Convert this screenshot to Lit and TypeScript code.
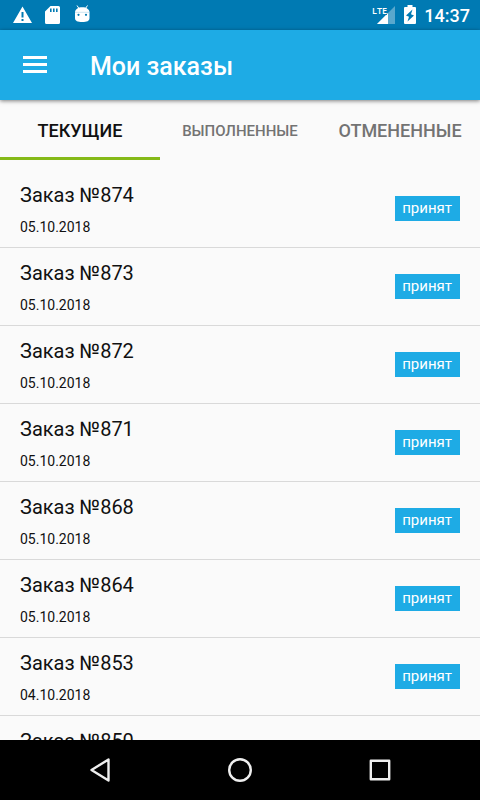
import { LitElement, html, css, svg } from "lit";
import { customElement, state } from "lit/decorators.js";
import { classMap } from "lit/directives/class-map.js";

interface Order {
  id: number;
  date: string;
  status: string;
}

const TABS = [
  { label: "ТЕКУЩИЕ", small: false },
  { label: "ВЫПОЛНЕННЫЕ", small: true },
  { label: "ОТМЕНЕННЫЕ", small: false },
];

const ORDERS: Order[] = [
  { id: 874, date: "05.10.2018", status: "принят" },
  { id: 873, date: "05.10.2018", status: "принят" },
  { id: 872, date: "05.10.2018", status: "принят" },
  { id: 871, date: "05.10.2018", status: "принят" },
  { id: 868, date: "05.10.2018", status: "принят" },
  { id: 864, date: "05.10.2018", status: "принят" },
  { id: 853, date: "04.10.2018", status: "принят" },
  { id: 850, date: "04.10.2018", status: "принят" },
];

@customElement("status-bar")
export class StatusBar extends LitElement {
  static styles = css`
    :host {
      display: flex;
      align-items: center;
      justify-content: space-between;
      height: 30px;
      padding: 0 10px 0 12px;
      background: #007ab3;
      color: #fff;
      flex: none;
    }
    .group {
      display: flex;
      align-items: center;
      gap: 10px;
    }
    .group.end {
      gap: 8px;
    }
    svg {
      display: block;
    }
    .lte {
      font-family: "Open Sans", Roboto, sans-serif;
      font-size: 9px;
      font-weight: 600;
      font-stretch: normal;
    }
    .time {
      padding-top: 2px;
      font-size: 18px;
      line-height: 28px;
      font-weight: 500;
    }
  `;

  render() {
    return html`
      <div class="group">
        <svg width="21" height="20" viewBox="0 0 21 20" fill="#fff" aria-hidden="true">
          <path fill-rule="evenodd" d="M10.500 1.500 20 18H1Z M9.500 7v5.500h2V7Z M9.500 14v2h2v-2Z" />
        </svg>
        <svg width="20" height="20" viewBox="0 0 20 20" fill="#fff" aria-hidden="true">
          <path fill-rule="evenodd" d="M7.500 1h8a1.500 1.500 0 0 1 1.500 1.500v15a1.500 1.500 0 0 1-1.500 1.500h-12A1.500 1.500 0 0 1 2 17.500V6.500Z M7 3.500V7h1.600V3.500Z M10 3.500V7h1.600V3.500Z M13 3.500V7h1.600V3.500Z" />
        </svg>
        <svg width="20" height="20" viewBox="0 0 20 20" aria-hidden="true">
          <path d="M4 .500 6 3.500M14.500.500 12.500 3.500" stroke="#fff" />
          <path fill="#fff" d="M2 7.500C2 4.300 5 2.300 9.250 2.300S16.500 4.300 16.500 7.500v5.500c0 3-2.600 4-7.250 4S2 16 2 13Z" />
          <path d="M2 7.300h14.500" stroke="#a9d2e6" stroke-width=".6" />
          <circle cx="5.500" cy="9.800" r="1.100" fill="#007ab3" />
          <circle cx="13" cy="9.800" r="1.100" fill="#007ab3" />
        </svg>
      </div>
      <div class="group end">
        <svg width="24" height="20" viewBox="0 0 24 20" aria-hidden="true">
          <path d="M23 1v18H5Z" fill="#fff" opacity=".35" />
          <path d="M16 8v11H5Z" fill="#fff" />
          <path d="M0 0h15v10H0z" fill="#007ab3" />
          <text class="lte" x="0" y="9" fill="#fff">LTE</text>
        </svg>
        <svg width="12" height="20" viewBox="0 0 12 20" aria-hidden="true">
          <path fill="#fff" d="M3.500 0h5v2H11a1 1 0 0 1 1 1v15a1 1 0 0 1-1 1H1a1 1 0 0 1-1-1V3a1 1 0 0 1 1-1h2.500Z" />
          <path fill="#007ab3" d="M8.500 4.500 2 10.500l3 1.200L3.500 16.500 10 10.500 7 9.300Z" />
        </svg>
        <span class="time">14:37</span>
      </div>
    `;
  }
}

@customElement("order-row")
export class OrderRow extends LitElement {
  static properties = { order: { attribute: false } };
  declare order: Order;

  static styles = css`
    :host {
      display: flex;
      align-items: center;
      justify-content: space-between;
      box-sizing: border-box;
      height: 78px;
      padding: 0 20px;
      border-bottom: 1px solid #d9d9d9;
    }
    .title {
      margin: 0;
      font-size: 20px;
      line-height: 26px;
      font-weight: 400;
      color: #111;
    }
    .date {
      display: block;
      margin-top: 10px;
      font-size: 14px;
      line-height: 18px;
      color: #111;
    }
    .status {
      padding: 0 8px 0 7px;
      font-size: 15px;
      line-height: 25px;
      color: #fff;
      background: #1eabe5;
    }
  `;

  render() {
    return html`
      <div>
        <h2 class="title">Заказ №${this.order.id}</h2>
        <time class="date">${this.order.date}</time>
      </div>
      <span class="status">${this.order.status}</span>
    `;
  }
}

@customElement("app-root")
export class AppRoot extends LitElement {
  @state() private active = 0;

  static styles = css`
    :host {
      display: flex;
      flex-direction: column;
      height: 100vh;
      font-family: Roboto, "Noto Sans", sans-serif;
      background: #fafafa;
    }
    button {
      margin: 0;
      padding: 0;
      border: 0;
      background: none;
      font: inherit;
      cursor: pointer;
    }
    svg {
      display: block;
    }
    .bar {
      display: flex;
      align-items: center;
      gap: 40px;
      flex: none;
      box-sizing: border-box;
      height: 70px;
      padding: 4px 20px 0;
      background: #1eabe5;
      color: #fff;
      box-shadow: 0 1px 4px rgba(0, 0, 0, 0.5);
      z-index: 1;
    }
    .heading {
      margin: 0;
      font-size: 25px;
      line-height: 32px;
      font-weight: 500;
    }
    .tabs {
      display: grid;
      grid-template-columns: repeat(3, 1fr);
      flex: none;
      height: 60px;
    }
    .tab {
      padding-top: 2px;
      border-top: 3px solid transparent;
      border-bottom: 3px solid transparent;
      font-size: 18px;
      line-height: 20px;
      font-weight: 500;
      color: #737373;
    }
    .tab.small {
      font-size: 15px;
    }
    .tab.active {
      color: #111;
      border-bottom-color: #85b918;
    }
    .orders {
      flex: 1;
      min-height: 0;
      margin: 0;
      padding: 10px 0 0;
      list-style: none;
      overflow-y: auto;
      scrollbar-width: none;
    }
    .nav {
      display: flex;
      justify-content: center;
      gap: 80px;
      flex: none;
      background: #000;
    }
    .key {
      display: flex;
      align-items: center;
      justify-content: center;
      width: 60px;
      height: 60px;
    }
  `;

  private key(label: string, shape: unknown) {
    return html`<button class="key" aria-label=${label}>
      <svg width="30" height="30" viewBox="0 0 30 30" fill="none" stroke="#eee" stroke-width="2.400" stroke-linejoin="round">
        ${shape}
      </svg>
    </button>`;
  }

  render() {
    return html`
      <status-bar></status-bar>
      <header class="bar">
        <button aria-label="Меню">
          <svg width="30" height="30" viewBox="0 0 30 30" fill="#fff">
            <path d="M3 4h24v3H3zM3 11h24v3H3zM3 18h24v3H3z" />
          </svg>
        </button>
        <h1 class="heading">Мои заказы</h1>
      </header>
      <div class="tabs" role="tablist">
        ${TABS.map(
          (tab, i) => html`<button
            role="tab"
            aria-selected=${i === this.active}
            class=${classMap({ tab: true, small: tab.small, active: i === this.active })}
            @click=${() => (this.active = i)}
          >${tab.label}</button>`
        )}
      </div>
      <ul class="orders">
        ${ORDERS.map((order) => html`<li><order-row .order=${order}></order-row></li>`)}
      </ul>
      <nav class="nav">
        ${this.key("Назад", svg`<path d="M23.500 4.500v21L6.500 15Z" />`)}
        ${this.key("Домой", svg`<circle cx="15" cy="15" r="10.800" />`)}
        ${this.key("Недавние", svg`<path d="M5.800 5.800h18.400v18.400H5.800z" />`)}
      </nav>
    `;
  }
}
